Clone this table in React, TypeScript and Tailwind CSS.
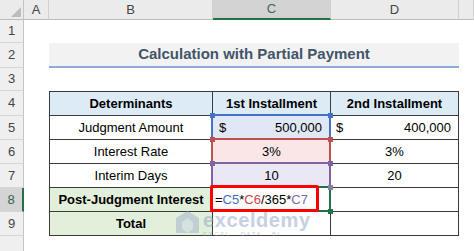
import clsx from 'clsx'
import type { ReactNode } from 'react'

const FONT = "font-['Liberation_Sans',Arial,sans-serif]"

function RowHead({ n, active }: { n?: number; active?: boolean }) {
  return (
    <div
      className={clsx(
        'flex w-[24px] shrink-0 items-center justify-center border-b border-b-[#d6d6d6] text-[13px]',
        active
          ? 'border-r-2 border-r-[#217346] bg-[#d4d4d4] text-[#2f6b45]'
          : 'border-r border-r-[#c4c4c4] bg-[#efefef] text-[#444]',
      )}
    >
      {n}
    </div>
  )
}

function ColHead({ label, w, active }: { label?: string; w: string; active?: boolean }) {
  return (
    <div
      className={clsx(
        'flex shrink-0 items-center justify-center border-r border-r-[#d0d0d0] text-[13px]',
        w,
        active
          ? 'border-b-2 border-b-[#217346] bg-[#d3d3d3] text-[#3d6b50]'
          : 'border-b border-b-[#bcbcbc] bg-[#ebebeb] text-[#444]',
      )}
    >
      {label}
    </div>
  )
}

function Row({ n, h, active, children }: { n?: number; h: string; active?: boolean; children?: ReactNode }) {
  return (
    <div className={clsx('flex', h)}>
      <RowHead n={n} active={active} />
      <div className="w-[25px] shrink-0" />
      {children}
    </div>
  )
}

const cellB = 'flex w-[164px] shrink-0 items-center justify-center border-x border-b border-[#3b3b3b]'
const cellC = 'flex w-[118px] shrink-0 items-center border-r border-b border-[#3b3b3b]'
const cellD = 'flex w-[128px] shrink-0 items-center border-r border-b border-[#3b3b3b]'

function Handle({ x, y, color }: { x: string; y: string; color: string }) {
  return <div className={clsx('absolute h-[5px] w-[5px]', x, y, color)} />
}

export default function App() {
  return (
    <div className={clsx('relative h-[251px] w-[474px] overflow-hidden bg-white text-black', FONT)}>
      {/* column headers */}
      <div className="flex h-[20px]">
        <div className="relative w-[24px] shrink-0 border-r border-b border-r-[#c4c4c4] border-b-[#bcbcbc] bg-[#ebebeb]">
          <svg className="absolute top-[7px] left-[11px]" width="10" height="10" viewBox="0 0 10 10">
            <path d="M10 0 L10 10 L0 10 Z" fill="#bdbdbd" />
          </svg>
        </div>
        <ColHead label="A" w="w-[25px]" />
        <ColHead label="B" w="w-[164px]" />
        <ColHead label="C" w="w-[118px]" active />
        <ColHead label="D" w="w-[128px]" />
        <ColHead w="flex-1" />
      </div>

      <Row n={1} h="h-[23px]" />
      <Row n={2} h="h-[25px]">
        <div className="flex w-[410px] shrink-0 items-center justify-center border-b-2 border-[#8ea9db] bg-[#f2f2f2] text-[15px] font-bold text-[#44546a]">
          Calculation with Partial Payment
        </div>
      </Row>
      <Row n={3} h="h-[23px]" />

      <Row n={4} h="h-[25px]">
        <div className="flex w-[164px] shrink-0 items-center justify-center border border-[#3b3b3b] bg-[#ddebf7] text-[13px] font-bold">
          Determinants
        </div>
        <div className="flex w-[118px] shrink-0 items-center justify-center border-y border-r border-[#3b3b3b] bg-[#ddebf7] text-[13px] font-bold">
          1st Installment
        </div>
        <div className="flex w-[128px] shrink-0 items-center justify-center border-y border-r border-[#3b3b3b] bg-[#ddebf7] text-[13px] font-bold">
          2nd Installment
        </div>
      </Row>

      <Row n={5} h="h-[24px]">
        <div className={clsx(cellB, 'text-[13px]')}>Judgment Amount</div>
        <div className={clsx(cellC, 'justify-between bg-[#e0e8f6] pr-[8px] pl-[6px] text-[13px]')}>
          <span>$</span>
          <span>500,000</span>
        </div>
        <div className={clsx(cellD, 'justify-between pr-[7px] pl-[5px] text-[13px]')}>
          <span>$</span>
          <span>400,000</span>
        </div>
      </Row>

      <Row n={6} h="h-[24px]">
        <div className={clsx(cellB, 'text-[13px]')}>Interest Rate</div>
        <div className={clsx(cellC, 'justify-center bg-[#fbe6e7] text-[13px]')}>3%</div>
        <div className={clsx(cellD, 'justify-center text-[13px]')}>3%</div>
      </Row>

      <Row n={7} h="h-[24px]">
        <div className={clsx(cellB, 'text-[13px]')}>Interim Days</div>
        <div className={clsx(cellC, 'justify-center bg-[#ebe8f6] text-[13px]')}>10</div>
        <div className={clsx(cellD, 'justify-center text-[13px]')}>20</div>
      </Row>

      <Row n={8} h="h-[24px]" active>
        <div className={clsx(cellB, 'bg-[#e2efda] text-[13px] font-bold')}>Post-Judgment Interest</div>
        <div className={clsx(cellC, 'pl-[2px] text-[13px]')}>
          =<span className="text-[#3e6ec0]">C5</span>*<span className="text-[#d0454c]">C6</span>/365*
          <span className="text-[#8266b0]">C7</span>
        </div>
        <div className={cellD} />
      </Row>

      <Row n={9} h="h-[24px]">
        <div className={clsx(cellB, 'bg-[#e2efda] text-[13px] font-bold')}>Total</div>
        <div className={cellC} />
        <div className={cellD} />
      </Row>

      <Row h="h-[24px]" />

      {/* formula reference outlines */}
      <div className="absolute top-[114px] left-[211px] h-[26px] w-[120px] border-2 border-[#4472c4]" />
      <div className="absolute top-[138px] left-[211px] h-[26px] w-[120px] border-2 border-[#c0504d]" />
      <div className="absolute top-[162px] left-[211px] h-[26px] w-[120px] border-2 border-[#8064a2]" />
      <div className="absolute top-[186px] left-[211px] h-[26px] w-[120px] border-2 border-[#217346]" />
      <Handle x="left-[210px]" y="top-[113px]" color="bg-[#4472c4]" />
      <Handle x="left-[328px]" y="top-[113px]" color="bg-[#4472c4]" />
      <Handle x="left-[210px]" y="top-[137px]" color="bg-[#c0504d]" />
      <Handle x="left-[328px]" y="top-[137px]" color="bg-[#c0504d]" />
      <Handle x="left-[210px]" y="top-[161px]" color="bg-[#8064a2]" />
      <Handle x="left-[328px]" y="top-[161px]" color="bg-[#8064a2]" />
      <Handle x="left-[328px]" y="top-[185px]" color="bg-[#8a7fa8]" />
      <Handle x="left-[328px]" y="top-[209px]" color="bg-[#217346]" />

      {/* highlight box */}
      <div className="absolute top-[185px] left-[210px] h-[27px] w-[109px] rounded-[2px] border-[3px] border-[#ff0000]" />

      {/* watermark */}
      <div className="pointer-events-none absolute top-[210px] left-[175px] flex items-start gap-[3px] opacity-50">
        <svg width="25" height="25" viewBox="0 0 25 25">
          <path d="M12.5 1 L24 8 L24 23 L1 23 L1 8 Z" fill="#9fb0cc" />
          <path d="M12.5 8 L18 12 L18 19 L12.5 23 L7 19 L7 12 Z" fill="#c9d3e4" />
        </svg>
        <div className="flex flex-col leading-none">
          <span className="text-[20px] font-bold tracking-[0.6px] text-[#8fa3c6]">exceldemy</span>
          <span className="mt-[1px] text-[6px] tracking-[1.6px] text-[#8fa3c6]">EXCEL · DATA · BI</span>
        </div>
      </div>
    </div>
  )
}
